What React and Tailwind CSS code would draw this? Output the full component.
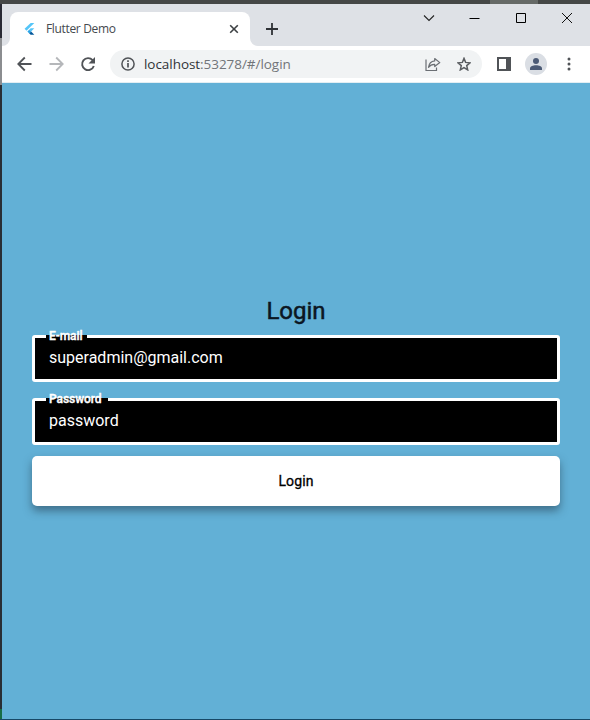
import React from "react";

function FlutterLogo() {
  return (
    <svg className="block h-[14px] w-[14px]" viewBox="0 0 14 14">
      <path d="M7.700 .9h3.600L3.500 8.700 1.600 6.800z" fill="#54c5f8" />
      <path d="M7.700 6.300h3.600L8.100 9.500 6.200 7.700z" fill="#54c5f8" />
      <path d="M4.400 9.500 6.200 7.700l1.900 1.800-1.900 1.900z" fill="#29a5e8" />
      <path d="m6.200 11.400 1.900-1.900 3.200 3.300H7.700z" fill="#01579b" />
    </svg>
  );
}

function TabStrip() {
  return (
    <div className="flex h-[42px] bg-[#dee1e6] pt-2">
      <div className="flex w-2 items-end">
        <svg className="block h-2 w-2" viewBox="0 0 8 8">
          <path d="M8 0v8H0a8 8 0 0 0 8-8z" fill="#fff" />
        </svg>
      </div>
      <div className="flex h-[34px] w-[240px] items-center rounded-t-lg bg-white pl-[13px] pr-[11px]">
        <FlutterLogo />
        <span className="ml-[9px] flex-1 whitespace-nowrap text-[12px] leading-4 tracking-[-0.34px] text-[#45494e]">
          Flutter Demo
        </span>
        <svg className="block h-[10px] w-[10px]" viewBox="0 0 10 10" fill="none" stroke="#3c4043" strokeWidth="1.6">
          <path d="m1.2 1.2 7.6 7.6M8.8 1.2 1.2 8.8" />
        </svg>
      </div>
      <div className="flex w-2 items-end">
        <svg className="block h-2 w-2" viewBox="0 0 8 8">
          <path d="M0 0v8h8a8 8 0 0 1-8-8z" fill="#fff" />
        </svg>
      </div>
      <svg className="ml-[8px] mt-[11px] block h-3 w-3" viewBox="0 0 12 12" fill="none" stroke="#2f3236" strokeWidth="1.8">
        <path d="M6 0v12M0 6h12" />
      </svg>
      <div className="ml-auto flex h-3 items-center">
        <svg className="mr-[34px] block h-3 w-3" viewBox="0 0 12 12" fill="none" stroke="#222" strokeWidth="1.100">
          <path d="m1 3.500 5 5 5-5" />
        </svg>
        <svg className="mr-[35px] block h-3 w-[11px]" viewBox="0 0 11 12" fill="none" stroke="#000" strokeWidth="1">
          <path d="M.5 6.500H10.500" />
        </svg>
        <svg className="mr-[35px] block h-3 w-[11px]" viewBox="0 0 11 12" fill="none" stroke="#000" strokeWidth="1">
          <path d="M1.500 1.500h9v9h-9z" />
        </svg>
        <svg className="mr-[17px] block h-3 w-3" viewBox="0 0 12 12" fill="none" stroke="#111" strokeWidth="1">
          <path d="m1 1 10 10M11 1 1 11" />
        </svg>
      </div>
    </div>
  );
}

function Toolbar() {
  return (
    <div className="flex h-[37px] items-center border-b border-[#e3eef3] bg-white pl-[14px]">
      <svg className="block h-4 w-4" viewBox="0 0 16 16" fill="none" stroke="#505357" strokeWidth="1.8">
        <path d="M15.500 8H2.500M8.800 1.500 2.300 8l6.500 6.500" />
      </svg>
      <svg className="ml-4 block h-4 w-4" viewBox="0 0 16 16" fill="none" stroke="#b5b7ba" strokeWidth="1.8">
        <path d="M1.500 8h13M8.200 1.500 14.700 8l-6.500 6.500" />
      </svg>
      <svg className="ml-4 block h-4 w-4" viewBox="0 0 16 16">
        <path d="M13.800 10A6 6 0 1 1 12.600 4.100" fill="none" stroke="#505357" strokeWidth="1.900" />
        <path d="M15 1v6.500H8.500z" fill="#505357" />
      </svg>
      <div className="ml-[14px] flex h-7 w-[372px] items-center rounded-full bg-[#f1f3f4] pl-[11px] pr-[11px]">
        <svg className="block h-[14px] w-[14px]" viewBox="0 0 14 14" fill="none" stroke="#505357" strokeWidth="1.5">
          <circle cx="7" cy="7" r="6.100" />
          <path d="M7 6.100v4.400M7 3.300v1.600" strokeWidth="1.700" />
        </svg>
        <span className="ml-[9px] flex-1 whitespace-nowrap text-[13.500px] leading-5 tracking-[-0.05px] text-[#717579]">
          <span className="text-[#303337]">localhost</span>:53278/#/login
        </span>
        <svg className="mr-4 block h-[15px] w-4" viewBox="0 0 16 15" fill="none" stroke="#6b6f74" strokeWidth="1.200">
          <path d="M1 2.500v11h10.500V10.500" />
          <path d="M9.700 1.500 14.800 5.600 9.700 9.500V7.300C6.900 7.200 5 8.200 3.500 10.300 4 6.500 6 4.300 9.700 3.900z" strokeLinejoin="round" />
        </svg>
        <svg className="block h-[14px] w-[14px]" viewBox="0 0 14 14" fill="none" stroke="#5b5e62" strokeWidth="1.500">
          <path d="m7 1.400 1.600 4 4.400.4-3.300 2.800 1 4.300L7 10.600l-3.700 2.300 1-4.300L1 5.800l4.400-.4z" />
        </svg>
      </div>
      <svg className="ml-[15px] block h-[14px] w-[14px]" viewBox="0 0 14 14">
        <path d="M0 0h14v14H0zM2 2v10h7V2z" fill="#505357" fillRule="evenodd" />
      </svg>
      <div className="ml-[14px] flex h-[22px] w-[22px] items-center justify-center rounded-full bg-[#dadee4]">
        <svg className="block h-3 w-3" viewBox="0 0 12 12" fill="#4b5a75">
          <circle cx="6" cy="3" r="3" />
          <path d="M0 12v-1.500C0 8.300 3 7.300 6 7.300s6 1 6 3.200V12z" />
        </svg>
      </div>
      <svg className="ml-[19.500px] block h-[14px] w-1" viewBox="0 0 4 14" fill="#505357">
        <circle cx="2" cy="2" r="1.500" />
        <circle cx="2" cy="7" r="1.500" />
        <circle cx="2" cy="12" r="1.500" />
      </svg>
    </div>
  );
}

function Field({ label, value, notchClass }) {
  return (
    <div className="relative flex h-[47px] items-center rounded-[3px] border-[3px] border-white bg-black px-[14px] pb-[2px]">
      <span className={"absolute left-[11px] top-[-3px] h-[3px] bg-black " + notchClass} />
      <span className="absolute left-[14px] top-[-9px] whitespace-nowrap text-[12px] font-medium leading-[14px] tracking-[-0.07px] text-white [-webkit-text-stroke:0.4px_white]">
        {label}
      </span>
      <span className="text-[16px] leading-5 text-white">{value}</span>
    </div>
  );
}

export default function App() {
  return (
    <div className="flex h-[720px] w-[590px] flex-col overflow-hidden bg-[#62b0d6]">
      <div className="flex h-1 shrink-0 bg-[#454746]">
        <div className="ml-[490px] w-[48px] bg-[#656967]" />
      </div>
      <div className="flex h-[715px]">
        <div className="flex w-[2px] flex-col bg-[#292e34]">
          <div className="h-[34px] bg-[#292a34]" />
          <div className="h-[47px] bg-[#8b8d90]" />
          <div className="mt-auto h-[10px] bg-[#176d45]" />
        </div>
        <div className="flex flex-1 flex-col font-['Open_Sans','Noto_Sans',sans-serif]">
          <TabStrip />
          <Toolbar />
          <main className="flex flex-1 flex-col bg-[#62b0d6] pl-[30px] pr-[30px] pt-[214px] font-['Roboto',sans-serif]">
            <h1 className="h-[38px] text-center text-[24px] font-normal leading-[28px] text-[#0b1622] [-webkit-text-stroke:0.5px_#0b1622]">
              Login
            </h1>
            <div className="flex flex-col gap-4">
              <Field label="E-mail" value="superadmin@gmail.com" notchClass="w-[41px]" />
              <Field label="Password" value="password" notchClass="w-[62px]" />
            </div>
            <button className="mt-[10.500px] h-[50px] rounded-[5px] bg-white text-[14px] font-normal leading-5 tracking-[0.1px] text-black shadow-[0_5px_9px_rgba(30,50,65,0.5)] [-webkit-text-stroke:0.3px_black]">
              Login
            </button>
          </main>
        </div>
      </div>
      <div className="h-px bg-[#174867]" />
    </div>
  );
}
